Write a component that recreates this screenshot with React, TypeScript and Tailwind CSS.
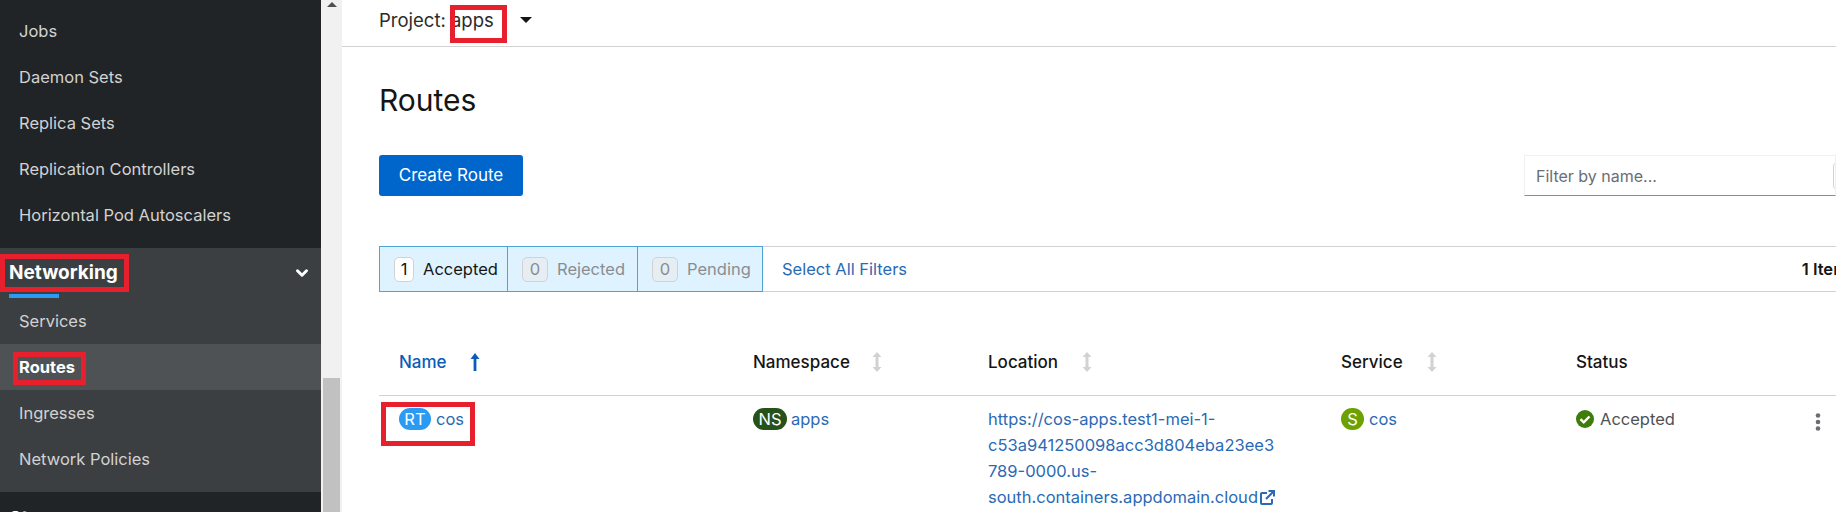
import { ChevronDown, ChevronUp } from 'lucide-react';

const font = { fontFamily: 'Inter' };

function SortIcon({ active }: { active?: boolean }) {
  if (active) {
    return (
      <svg width="10" height="18" viewBox="0 0 10 18" className="fill-[#0b5cb8]">
        <path d="M5 0 L9.5 6 L6.4 6 L6.4 18 L3.6 18 L3.6 6 L0.5 6 Z" />
      </svg>
    );
  }
  return (
    <svg width="10" height="20" viewBox="0 0 10 20" className="fill-[#d2d2d2]">
      <path d="M5 0 L9.5 5 L6.5 5 L6.5 15 L9.5 15 L5 20 L0.5 15 L3.5 15 L3.5 5 L0.5 5 Z" />
    </svg>
  );
}

function Badge({ label, className }: { label: string; className: string }) {
  return (
    <span className={`inline-flex h-[22px] shrink-0 items-center justify-center rounded-full text-[16.5px] text-white ${className}`}>
      {label}
    </span>
  );
}

function Chip({ count, label, active, className }: { count: number; label: string; active?: boolean; className: string }) {
  return (
    <div className={`flex h-full items-center gap-[9px] border-r border-[#4fa3d9] bg-[#def3ff] pl-[14px] text-[16.5px] ${active ? 'text-[#151515]' : 'text-[#8a8d90]'} ${className}`}>
      <span className={`flex h-[25px] items-center justify-center rounded-[5px] border border-[#d2d2d2] ${active ? 'w-[20px] bg-white' : 'w-[26px] bg-[#e6eef3]'}`}>
        {count}
      </span>
      {label}
    </div>
  );
}

const navTop = ['Jobs', 'Daemon Sets', 'Replica Sets', 'Replication Controllers', 'Horizontal Pod Autoscalers'];
const navSub = ['Services', 'Routes', 'Ingresses', 'Network Policies'];

export default function App() {
  return (
    <div className="relative flex h-[512px] w-[1836px] overflow-hidden bg-white" style={font}>
      {/* sidebar */}
      <aside className="flex w-[321px] shrink-0 flex-col bg-[#212427] text-[16.5px] text-[#d2d2d2]">
        <div className="h-[248px] shrink-0 pt-[8px]">
          {navTop.map((item) => (
            <div key={item} className="flex h-[46px] items-center pl-[19px]">{item}</div>
          ))}
        </div>
        <div className="h-[244px] shrink-0 bg-[#3c3f42]">
          <div className="flex h-[46px] items-center justify-between pl-[9px] pr-[10px] pt-[4px]">
            <span className="text-[19px] font-bold text-white">Networking</span>
            <ChevronDown size={18} strokeWidth={4} className="text-white" />
          </div>
          <div className="ml-[9px] h-[4px] w-[50px] bg-[#2b9af3]" />
          {navSub.map((item) => (
            <div
              key={item}
              className={`flex h-[46px] items-center pl-[19px] ${item === 'Routes' ? 'bg-[#4f5255] font-bold text-white' : ''}`}
            >
              {item}
            </div>
          ))}
        </div>
        <div className="flex h-[46px] shrink-0 items-center justify-between pl-[9px] pr-[12px] pt-[8px] text-[19px] font-bold text-white">
          <span>Storage</span>
          <ChevronUp size={18} strokeWidth={4} />
        </div>
      </aside>

      {/* scrollbar */}
      <div className="relative w-[21px] shrink-0 bg-[#f1f1f1]">
        <div className="mx-auto mt-[2px] h-0 w-0 border-x-[5px] border-b-[5px] border-x-transparent border-b-[#505050]" />
        <div className="absolute left-[2px] top-[378px] h-[134px] w-[17px] bg-[#c1c1c1]" />
      </div>

      {/* main */}
      <main className="min-w-0 flex-1 text-[16.5px] text-[#151515]">
        <div className="flex h-[47px] items-start border-b border-[#d2d2d2] pl-[37px] pt-[8px]">
          <span className="text-[18.5px] leading-[24px] text-[#2b2b2b]">Project: apps</span>
          <span className="ml-[26px] mt-[9px] h-0 w-0 border-x-[6px] border-t-[6px] border-x-transparent border-t-[#151515]" />
        </div>

        <div className="pl-[37px]">
          <h1 className="mt-[31px] text-[30px] leading-[44px]">Routes</h1>
          <div className="mt-[33px] flex items-start justify-between">
            <button className="flex h-[41px] w-[144px] items-center justify-center rounded-[3px] bg-[#0066cc] text-[17px] text-white">
              Create Route
            </button>
            <div className="flex h-[41px] w-[312px] items-center overflow-hidden border-x border-t border-[#f0f0f0] border-b border-b-[#8a8d90] pl-[11px] text-[16px] text-[#6a6e73]">
              <span className="flex-1">Filter by name...</span>
              <span className="mr-[-8px] h-[26px] w-[10px] rounded-[3px] border border-[#d2d2d2]" />
            </div>
          </div>
          <div className="mt-[50px] flex h-[46px] items-center justify-between border-y border-[#d2d2d2]">
            <div className="flex h-[46px] items-center">
              <div className="flex h-full border-y border-l border-[#4fa3d9]">
                <Chip count={1} label="Accepted" active className="w-[128px]" />
                <Chip count={0} label="Rejected" className="w-[130px]" />
                <Chip count={0} label="Pending" className="w-[125px]" />
              </div>
              <span className="ml-[19px] text-[#2a6ab5]">Select All Filters</span>
            </div>
            <span className="mr-[-12px] font-semibold whitespace-nowrap">1 Item</span>
          </div>
        </div>

        <div className="ml-[37px] mt-[58px] grid grid-cols-[374px_235px_353px_235px_1fr] border-b border-[#d2d2d2] pb-[21px] text-[17px] font-medium leading-[24px]">
          <div className="flex items-center gap-[23px] pl-[20px] text-[#0b5cb8]">Name <SortIcon active /></div>
          <div className="flex items-center gap-[22px]">Namespace <SortIcon /></div>
          <div className="flex items-center gap-[24px]">Location <SortIcon /></div>
          <div className="flex items-center gap-[24px]">Service <SortIcon /></div>
          <div className="flex items-center">Status</div>
        </div>

        <div className="ml-[37px] grid grid-cols-[374px_235px_353px_235px_1fr] pt-[12px] text-[#2a6ab5]">
          <div className="flex items-center gap-[5px] self-start pl-[20px] leading-[22px]"><Badge label="RT" className="w-[32px] bg-[#2b9af3]" /> cos</div>
          <div className="flex items-center gap-[4px] self-start leading-[22px]"><Badge label="NS" className="w-[34px] bg-[#27511a]" /> apps</div>
          <div className="mt-[-2px] leading-[26px] whitespace-nowrap">
            https://cos-apps.test1-mei-1-
            <br />
            c53a941250098acc3d804eba23ee3
            <br />
            789-0000.us-
            <br />
            south.containers.appdomain.cloud
            <svg width="15" height="15" viewBox="0 0 15 15" className="ml-[2px] inline align-[-2px]" fill="none" stroke="currentColor" strokeWidth="2">
              <path d="M7 3 H2 a1 1 0 0 0 -1 1 V13 a1 1 0 0 0 1 1 H11 a1 1 0 0 0 1 -1 V9" />
              <path d="M6 9 L13 2" />
              <path d="M8.5 1 H14 V6.5" />
            </svg>
          </div>
          <div className="flex items-center gap-[5px] self-start leading-[22px]"><Badge label="S" className="w-[23px] bg-[#6ca100]" /> cos</div>
          <div className="flex items-start justify-between self-start pr-[15px] text-[#4f5255]">
            <span className="flex items-center gap-[6px] leading-[22px]">
              <svg width="18" height="18" viewBox="0 0 18 18">
                <circle cx="9" cy="9" r="9" fill="#3e7d0a" />
                <path d="M4.5 9.2 L7.7 12.3 L13.5 6.5" fill="none" stroke="white" strokeWidth="2.4" />
              </svg>
              Accepted
            </span>
            <svg width="6" height="18" viewBox="0 0 6 18" className="mt-[5px] fill-[#6a6e73]">
              <circle cx="3" cy="2.5" r="2.3" />
              <circle cx="3" cy="9" r="2.3" />
              <circle cx="3" cy="15.5" r="2.3" />
            </svg>
          </div>
        </div>
      </main>

      {/* red annotation boxes */}
      <div className="absolute left-[450px] top-[5px] h-[38px] w-[57px] border-[5px] border-[#e8202d]" />
      <div className="absolute left-0 top-[254px] h-[38px] w-[129px] border-[5px] border-[#e8202d]" />
      <div className="absolute left-[13px] top-[352px] h-[33px] w-[73px] border-[5px] border-[#e8202d]" />
      <div className="absolute left-[381px] top-[402px] h-[44px] w-[94px] border-[5px] border-[#e8202d]" />
    </div>
  );
}
